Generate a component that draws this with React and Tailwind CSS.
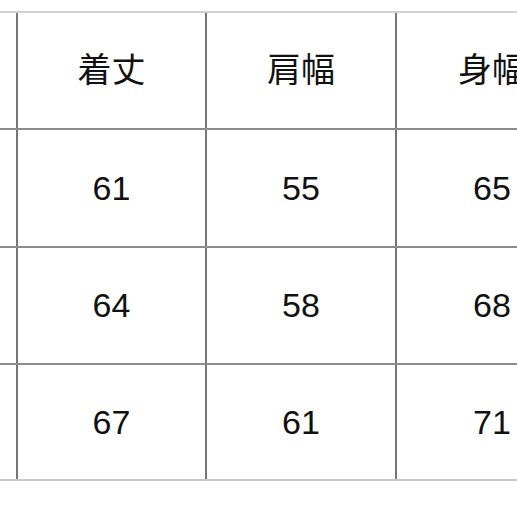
import React from "react";

const rows = [
  ["着丈", "肩幅", "身幅"],
  ["61", "55", "65"],
  ["64", "58", "68"],
  ["67", "61", "71"],
];

const heights = ["h-[117px]", "h-[118px]", "h-[117px]", "h-[116px]"];

function App() {
  return (
    <div
      className="w-[517px] h-[517px] overflow-hidden bg-white pt-[11px] text-[#111111]"
      style={{ fontFamily: '"Liberation Sans", "Noto Sans CJK JP", sans-serif' }}
    >
      <div className="w-[587px] border-t-2 border-[#d2d2d2]">
        {rows.map((row, i) => (
          <div
            key={i}
            className={`flex ${heights[i]} border-b-2 ${
              i === rows.length - 1 ? "border-[#c9c9c9]" : "border-[#8c8c8c]"
            }`}
          >
            <div className="w-[18px] shrink-0 border-r-2 border-[#767676]" />
            <div className="w-[189px] shrink-0 border-r-2 border-[#767676] flex items-center justify-center text-[34px]">
              {row[0]}
            </div>
            <div className="w-[190px] shrink-0 border-r-2 border-[#767676] flex items-center justify-center text-[34px]">
              {row[1]}
            </div>
            <div className="w-[190px] shrink-0 flex items-center justify-center text-[34px]">
              {row[2]}
            </div>
          </div>
        ))}
      </div>
    </div>
  );
}

export default App;
